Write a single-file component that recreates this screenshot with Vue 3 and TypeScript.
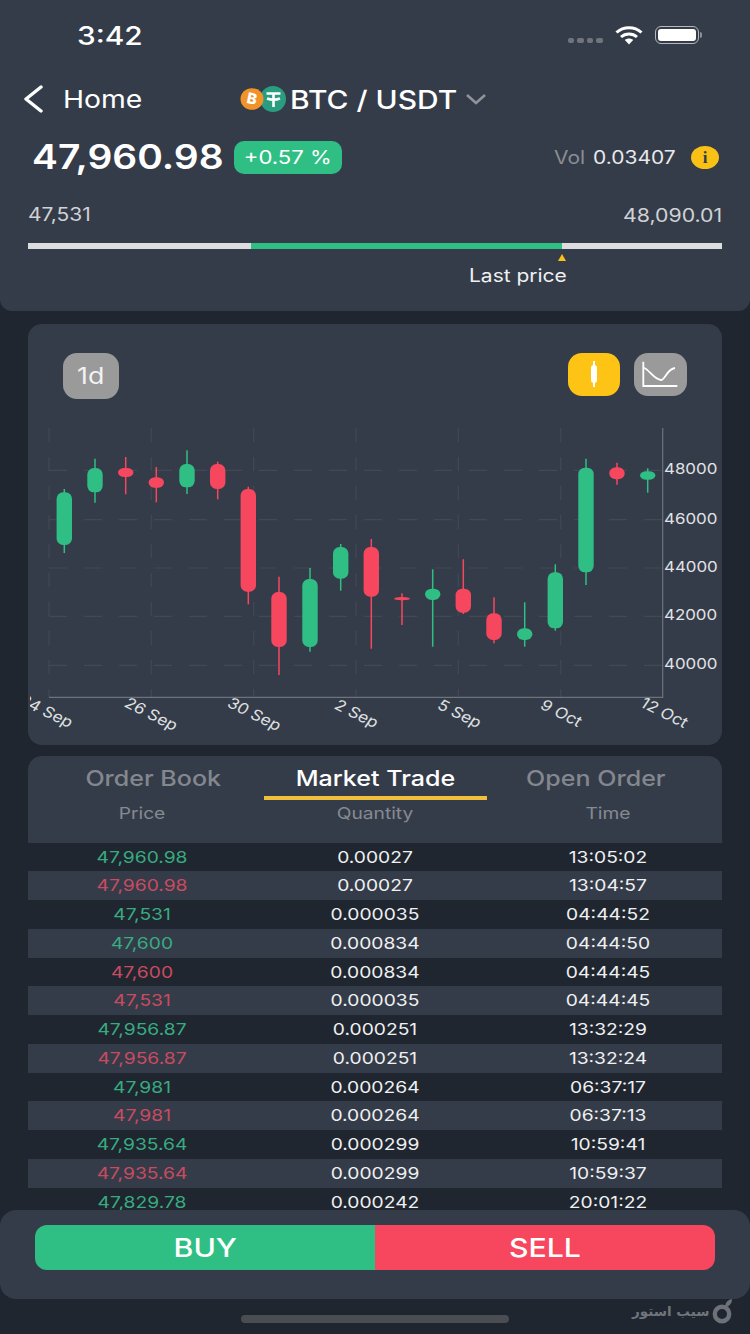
<script setup lang="ts">
interface Candle { x: number; wt: number; wb: number; bt: number; bb: number; up: boolean }
const candles: Candle[] = [
  { x: 64.3, wt: 489, wb: 553, bt: 492.3, bb: 545, up: true },
  { x: 95, wt: 458.7, wb: 502.7, bt: 468, bb: 492.3, up: true },
  { x: 125.7, wt: 457, wb: 494.3, bt: 468, bb: 477, up: false },
  { x: 156.3, wt: 467, wb: 502.3, bt: 477.3, bb: 487.7, up: false },
  { x: 187, wt: 450.3, wb: 494, bt: 464, bb: 487.3, up: true },
  { x: 217.7, wt: 461.7, wb: 499.3, bt: 464, bb: 489, up: false },
  { x: 248.3, wt: 486.7, wb: 604.3, bt: 489, bb: 591.7, up: false },
  { x: 279, wt: 576.7, wb: 675, bt: 592, bb: 647, up: false },
  { x: 310, wt: 568, wb: 651.7, bt: 579, bb: 647, up: true },
  { x: 340.7, wt: 544, wb: 590.7, bt: 547, bb: 578.7, up: true },
  { x: 371.3, wt: 539, wb: 648.7, bt: 547, bb: 596.7, up: false },
  { x: 402, wt: 593.3, wb: 625, bt: 597, bb: 600.3, up: false },
  { x: 432.7, wt: 569.3, wb: 646.7, bt: 588.7, bb: 600, up: true },
  { x: 463.3, wt: 559.3, wb: 614, bt: 588.7, bb: 612.7, up: false },
  { x: 494, wt: 597.3, wb: 643.3, bt: 613.3, bb: 640, up: false },
  { x: 524.7, wt: 602.3, wb: 646.7, bt: 628.3, bb: 640, up: true },
  { x: 555.3, wt: 564.3, wb: 630.7, bt: 572.3, bb: 628.3, up: true },
  { x: 586, wt: 458.7, wb: 585, bt: 467.7, bb: 572.3, up: true },
  { x: 617, wt: 462.7, wb: 484.7, bt: 467.3, bb: 479.3, up: false },
  { x: 647.7, wt: 468.3, wb: 492.7, bt: 471.3, bb: 479.7, up: true },
]
const vGrid = [49, 151.3, 253.7, 356, 458.3, 560.7]
const hGrid = [
  { y: 470.3, label: '48000' },
  { y: 519.7, label: '46000' },
  { y: 568, label: '44000' },
  { y: 616.3, label: '42000' },
  { y: 665.3, label: '40000' },
]
const xLabels = [
  { x: 18, y: 703, label: '24 Sep' },
  { x: 123, y: 706, label: '26 Sep' },
  { x: 226, y: 706, label: '30 Sep' },
  { x: 333, y: 708, label: '2 Sep' },
  { x: 436, y: 708, label: '5 Sep' },
  { x: 539, y: 708, label: '9 Oct' },
  { x: 639, y: 706, label: '12 Oct' },
]
const trades = [
  ['47,960.98', '0.00027', '13:05:02', 'g'],
  ['47,960.98', '0.00027', '13:04:57', 'r'],
  ['47,531', '0.000035', '04:44:52', 'g'],
  ['47,600', '0.000834', '04:44:50', 'g'],
  ['47,600', '0.000834', '04:44:45', 'r'],
  ['47,531', '0.000035', '04:44:45', 'r'],
  ['47,956.87', '0.000251', '13:32:29', 'g'],
  ['47,956.87', '0.000251', '13:32:24', 'r'],
  ['47,981', '0.000264', '06:37:17', 'g'],
  ['47,981', '0.000264', '06:37:13', 'r'],
  ['47,935.64', '0.000299', '10:59:41', 'g'],
  ['47,935.64', '0.000299', '10:59:37', 'r'],
  ['47,829.78', '0.000242', '20:01:22', 'g'],
]
</script>

<template>
  <div class="page">
    <section class="top">
      <div class="status">
        <span class="clock">3:42</span>
        <div class="status-icons">
          <span class="dots"><i></i><i></i><i></i><i></i></span>
          <svg class="wifi" viewBox="0 0 28 20" width="28" height="20">
            <path d="M1.5 7.5 C8.5 1 19.5 1 26.5 7.5" fill="none" stroke="#fff" stroke-width="3"/>
            <path d="M6 12 C10.5 8 17.5 8 22 12" fill="none" stroke="#fff" stroke-width="3"/>
            <path d="M9.8 15 C12.2 13 15.8 13 18.2 15 L14 19.5 Z" fill="#fff"/>
          </svg>
          <span class="battery"><b></b></span>
          <span class="nub"></span>
        </div>
      </div>
      <div class="nav">
        <svg class="back" viewBox="0 0 22 28" width="22" height="28">
          <path d="M19 2 L4 14 L19 26" fill="none" stroke="#fff" stroke-width="3.4" stroke-linecap="round" stroke-linejoin="round"/>
        </svg>
        <span class="home">Home</span>
        <svg class="coins" viewBox="0 0 48 28" width="48" height="28">
          <circle cx="33" cy="14" r="13" fill="#2a9d80"/>
          <path d="M26.5 8.5 H40.5 M33.5 8.5 V22 M27 13.5 Q33.5 16 40 13.5" fill="none" stroke="#fff" stroke-width="2.6"/>
          <ellipse cx="12" cy="14" rx="11.5" ry="10.8" fill="#f2932a"/>
          <text x="12" y="19" class="btc" transform="rotate(12 12 14)">B</text>
        </svg>
        <span class="pair">BTC / USDT</span>
        <svg class="caret" viewBox="0 0 22 12" width="22" height="12">
          <path d="M2 2 L11 10 L20 2" fill="none" stroke="#8f939a" stroke-width="2.6"/>
        </svg>
      </div>
      <div class="quote">
        <span class="last">47,960.98</span>
        <span class="badge"><span class="sx">+0.57 %</span></span>
        <span class="vol-label">Vol</span>
        <span class="vol">0.03407</span>
        <span class="info">i</span>
      </div>
      <div class="range-labels">
        <span class="low">47,531</span>
        <span class="high">48,090.01</span>
      </div>
      <div class="range">
        <div class="range-fill"></div>
      </div>
      <div class="marker-wrap">
        <span class="marker"></span>
        <span class="marker-text">Last price</span>
      </div>
    </section>

    <section class="chart-card">
      <div class="tools">
        <span class="tool interval"><span class="sx">1d</span></span>
        <div class="tool-group">
          <span class="tool active">
            <svg viewBox="0 0 52 43" width="52" height="43">
              <path d="M26 8 V34" stroke="#fff" stroke-width="2"/>
              <rect x="23" y="12" width="6" height="18" rx="3" fill="#fff"/>
            </svg>
          </span>
          <span class="tool">
            <svg viewBox="0 0 53 43" width="53" height="43">
              <path d="M9.3 8.7 V33 H43.3" fill="none" stroke="#fff" stroke-width="1.8"/>
              <path d="M9.3 14.5 C15 16 20 27 27 27 C31 27 33 16 41 15" fill="none" stroke="#fff" stroke-width="1.8"/>
            </svg>
          </span>
        </div>
      </div>
      <svg class="plot" viewBox="28 420 694 325" width="694" height="325">
        <defs>
          <clipPath id="plot-clip"><rect x="30" y="420" width="692" height="325"/></clipPath>
        </defs>
        <line v-for="x in vGrid" :key="x" :x1="x" :x2="x" y1="428" y2="697" class="grid v"/>
        <line v-for="h in hGrid" :key="h.y" x1="49" x2="662" :y1="h.y" :y2="h.y" class="grid h"/>
        <path d="M49 697.3 H662.7 V428" fill="none" stroke="#6e727c" stroke-width="1.2"/>
        <g v-for="c in candles" :key="c.x">
          <line :x1="c.x" :x2="c.x" :y1="c.wt" :y2="c.wb" :class="c.up ? 'wick-g' : 'wick-r'"/>
          <rect :x="c.x - 7.7" :y="c.bt" width="15.4" :height="c.bb - c.bt" rx="6.5" :ry="Math.min(6.5, (c.bb - c.bt) / 2)" :class="c.up ? 'body-g' : 'body-r'"/>
        </g>
        <text v-for="h in hGrid" :key="h.label" :transform="`translate(664 ${h.y + 4}) scale(1.165 1)`" class="y-label">{{ h.label }}</text>
        <g clip-path="url(#plot-clip)">
          <text v-for="l in xLabels" :key="l.label" :transform="`translate(${l.x} ${l.y}) scale(1.165 1) rotate(30)`" class="x-label">{{ l.label }}</text>
        </g>
      </svg>
    </section>

    <section class="trades">
      <div class="trades-head">
        <div class="tabs">
          <span class="tab first"><span class="sx">Order Book</span></span>
          <span class="tab on"><span class="sx">Market Trade</span></span>
          <span class="tab third"><span class="sx">Open Order</span></span>
        </div>
        <div class="cols heads">
          <span>Price</span><span>Quantity</span><span>Time</span>
        </div>
      </div>
      <div v-for="(t, i) in trades" :key="i" class="cols row">
        <span :class="t[3] === 'g' ? 'pg' : 'pr'">{{ t[0] }}</span>
        <span>{{ t[1] }}</span>
        <span>{{ t[2] }}</span>
      </div>
    </section>

    <div class="action-bar">
      <div class="actions">
        <span class="act buy"><span class="sx">BUY</span></span>
        <span class="act sell"><span class="sx">SELL</span></span>
      </div>
    </div>

    <div class="home-bar"></div>
    <div class="watermark">
      <span dir="rtl" lang="fa">سیب استور</span>
      <svg viewBox="0 0 22 26" width="22" height="26">
        <circle cx="10" cy="16" r="7.2" fill="none" stroke="#6d7178" stroke-width="4.4"/>
        <path d="M13 8 Q14 2 20 1 Q20 7 14.5 9 Z" fill="#6d7178"/>
      </svg>
    </div>
  </div>
</template>

<style>
html, body { margin: 0; background: #1f2630; }
</style>

<style scoped>
.page {
  position: relative;
  width: 750px;
  height: 1334px;
  overflow: hidden;
  background: #1f2630;
  color: #fff;
  font-family: Inter, "Noto Sans", sans-serif;
}
/* The reference's type is horizontally widened by a constant factor. */
.sx { display: inline-block; transform: scaleX(1.165); white-space: nowrap; }
.clock, .home, .pair, .last, .vol-label, .vol, .low, .marker-text {
  transform: scaleX(1.165);
  transform-origin: left center;
}
.high { transform: scaleX(1.165); transform-origin: right center; }
.top {
  height: 311px;
  box-sizing: border-box;
  background: #353c49;
  border-radius: 0 0 12px 12px;
  padding-top: 20px;
}
.status {
  height: 30px;
  display: flex;
  align-items: center;
  justify-content: space-between;
  padding: 0 48px 0 77px;
}
.clock { font-size: 25.6px; font-weight: 500; }
.status-icons { display: flex; align-items: center; }
.dots { display: flex; gap: 3px; margin: 11px 12px 0 0; }
.dots i { width: 6.5px; height: 5px; border-radius: 2px; background: #6f747d; }
.wifi { margin-right: 12px; }
.battery {
  box-sizing: border-box;
  width: 44px; height: 18px; padding: 2px;
  border: 1.5px solid #b5b8bc; border-radius: 6px;
  display: block;
}
.battery b { display: block; width: 100%; height: 100%; background: #fff; border-radius: 3px; }
.nub { width: 2px; height: 6px; margin-left: 1.5px; background: #8d9198; border-radius: 0 2px 2px 0; }
.nav {
  height: 36px;
  margin-top: 31px;
  display: flex;
  align-items: center;
  padding-left: 22px;
}
.home { font-size: 24.3px; margin-left: 19px; }
.coins { margin-left: 109px; flex: none; }
.pair { font-size: 25.7px; font-weight: 500; margin-left: 2px; white-space: nowrap; }
.caret { margin-left: 31px; }
.quote {
  height: 40px;
  margin-top: 20px;
  display: flex;
  align-items: center;
  padding-left: 32px;
}
.last { font-size: 33.4px; font-weight: 600; width: 202px; white-space: nowrap; }
.badge {
  width: 108px; height: 33px; border-radius: 10px;
  background: #2fbf85;
  font-size: 19px;
  display: flex; align-items: center; justify-content: center;
}
.vol-label { margin-left: 212px; width: 39px; font-size: 18px; color: #8a8e95; }
.vol { font-size: 18px; color: #e8e9eb; width: 98px; }
.info {
  width: 28px; height: 23px; border-radius: 50%;
  background: #f9c116; color: #353c49;
  font: 700 17px/23px "Liberation Serif", serif; text-align: center;
}
.range-labels {
  display: flex;
  justify-content: space-between;
  margin: 27px 28px 0;
  font-size: 18px;
  line-height: 22px;
  color: #d0d2d5;
}
.high { font-size: 18.3px; }
.range {
  position: relative;
  height: 6px;
  margin: 17px 28px 0;
  background: #dcdddf;
}
.range-fill { margin-left: 223px; width: 311px; height: 100%; background: #2fbf85; }
.marker-wrap { position: relative; height: 40px; }
.marker {
  position: absolute; left: 558px; top: 5px;
  width: 8px; height: 7px;
  background: #f9c116;
  clip-path: polygon(50% 0, 100% 100%, 0 100%);
}
.marker-text {
  position: absolute; left: 469px; top: 16px;
  font-size: 18px; line-height: 22px; color: #f0f0f2; white-space: nowrap;
}
.chart-card {
  width: 694px;
  height: 421px;
  margin: 13px 28px 0;
  box-sizing: border-box;
  background: #353c49;
  border-radius: 14px;
  padding-top: 29px;
}
.tools {
  height: 67px;
  display: flex;
  align-items: flex-start;
  justify-content: space-between;
  padding: 0 35px;
}
.tool {
  display: block;
  width: 53px; height: 43px;
  background: #9a9a9a;
  border-radius: 14px;
}
.tool svg { display: block; }
.interval {
  width: 56px; height: 46px;
  font-size: 23px; line-height: 46px; text-align: center; color: #f2f2f2;
}
.active { background: #fdc315; width: 52px; }
.tool-group { display: flex; gap: 14px; }
.plot { display: block; }
.grid { stroke: #424855; stroke-width: 1.2; }
.grid.v { stroke-dasharray: 14 15; }
.grid.h { stroke-dasharray: 18 17; }
.wick-g { stroke: #2fbf85; stroke-width: 1.5; }
.wick-r { stroke: #f7475f; stroke-width: 1.5; }
.body-g { fill: #2fbf85; }
.body-r { fill: #f7475f; }
.y-label { font-size: 14.5px; fill: #e2e3e5; }
.x-label { font-size: 15px; fill: #dfe0e2; }
.btc { font-size: 15px; font-weight: 800; fill: #fff; text-anchor: middle; }
.trades { width: 694px; margin: 11px 28px 0; }
.trades-head {
  height: 86.7px;
  background: #353c49;
  border-radius: 14px 14px 0 0;
}
.tabs {
  display: grid;
  grid-template-columns: 236px 223px 235px;
  height: 44px;
  text-align: center;
}
.tab {
  height: 44px;
  box-sizing: border-box;
  font-size: 21.5px; font-weight: 500;
  line-height: 44px; color: #83878e; white-space: nowrap;
}
.tab.first { padding-left: 14px; }
.tab.third { padding-right: 17px; }
.tab.on { color: #fff; border-bottom: 4px solid #f0bf3c; }
.cols {
  display: grid;
  grid-template-columns: 228px 238px 228px;
  text-align: center;
  font-size: 16.5px;
}
.cols span { transform: scaleX(1.165); }
.heads { color: #868a91; line-height: 26px; margin-top: 0; }
.row { height: 28.75px; line-height: 29.5px; color: #eff0f1; }
.row:nth-child(odd) { background: #353c49; }
.pg { color: #38ab80; }
.pr { color: #c94b60; }
.action-bar {
  position: absolute;
  left: 0; right: 0; top: 1210px;
  height: 89px;
  background: #353c49;
  border-radius: 16px;
  padding: 15px 35px 0;
  box-sizing: border-box;
}
.actions { display: flex; height: 45px; border-radius: 12px; overflow: hidden; }
.act {
  flex: 1; text-align: center;
  font-size: 26px; font-weight: 500; line-height: 45px;
}
.buy { background: #2fbf85; }
.sell { background: #f7475f; }
.home-bar {
  position: absolute;
  left: 241px; top: 1315px;
  width: 268px; height: 8px;
  border-radius: 4px;
  background: #4a4d52;
}
.watermark {
  position: absolute;
  left: 632px; top: 1298px;
  width: 102px;
  display: flex;
  align-items: center;
  justify-content: space-between;
  color: #70747b;
  font: 700 13.5px/26px "DejaVu Sans", sans-serif;
  white-space: nowrap;
}
.watermark svg { flex: none; }
</style>
